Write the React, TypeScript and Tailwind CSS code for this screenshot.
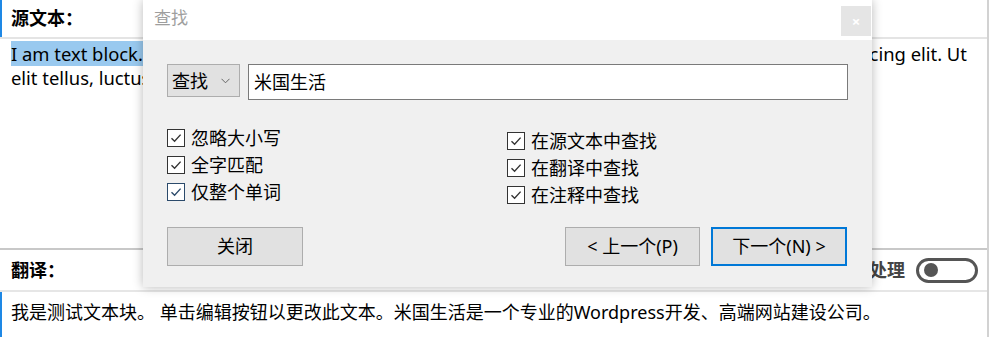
import React from "react";

const FONT = '"Noto Sans", "Noto Sans CJK SC", sans-serif';

function Check({ focus }: { focus?: boolean }) {
  return (
    <span
      className={`flex h-[18px] w-[18px] shrink-0 items-center justify-center border bg-white ${
        focus ? "border-[#2b4a6b]" : "border-[#333333]"
      }`}
    >
      <svg width="14" height="14" viewBox="0 0 14 14">
        <polyline
          points="2.5,7.2 5.6,10.2 11.6,3.6"
          fill="none"
          stroke={focus ? "#2b4a6b" : "#333333"}
          strokeWidth="1.4"
        />
      </svg>
    </span>
  );
}

function CheckRow({ label, focus }: { label: string; focus?: boolean }) {
  return (
    <div className="flex h-[27px] items-center gap-[6px]">
      <Check focus={focus} />
      <span className="text-[18px] leading-none text-[#000]">{label}</span>
    </div>
  );
}

export default function App() {
  return (
    <div
      className="relative h-[337px] w-[991px] overflow-hidden bg-white text-black"
      style={{ fontFamily: FONT }}
    >
      <div className="flex h-[337px] w-[989px] flex-col border-r-2 border-[#d2d2d2]">
        <div className="flex h-[37px] shrink-0 items-center border-l-2 border-[#1e88e5] pl-[9px] text-[18px] font-bold">
          源文本：
        </div>
        <div className="h-[2px] shrink-0 bg-[#e4e4e4]" />
        <div className="h-[209px] shrink-0 overflow-hidden pl-[11px] pt-[3px] text-[18.4px] leading-[24px]">
          <div className="whitespace-nowrap">
            <span className="bg-[#99c9ef]">I am text block.</span> Click edit button to change this
            text. Lorem ipsum dolor sit amet, consectetur adipiscing elit. Ut
          </div>
          <div className="whitespace-nowrap">
            elit tellus, luctus nec ullamcorper mattis, pulvinar dapibus leo.
          </div>
        </div>
        <div className="h-[2px] shrink-0 bg-[#c8c8c8]" />
        <div className="flex h-[40px] shrink-0 items-center justify-between pl-[11px] pr-[9px]">
          <span className="text-[18px] font-bold">翻译：</span>
          <div className="flex items-center gap-[11px]">
            <span className="text-[18px] font-bold text-[#444]">自动翻译处理</span>
            <span className="flex h-[25px] w-[62px] items-center rounded-full border-[3px] border-[#555] pl-[5px]">
              <span className="h-[14px] w-[14px] rounded-full bg-[#555]" />
            </span>
          </div>
        </div>
        <div className="h-[2px] shrink-0 bg-[#e6e6e6]" />
        <div className="flex-1 border-l-2 border-[#1e88e5] pl-[9px] pt-[8px] text-[18px] leading-[25px]">
          我是测试文本块。 单击编辑按钮以更改此文本。米国生活是一个专业的Wordpress开发、高端网站建设公司。
        </div>
      </div>

      {/* Find dialog */}
      <div className="absolute left-[143px] top-0 flex h-[287px] w-[729px] flex-col shadow-[0_0_10px_rgba(0,0,0,0.28)]">
        <div className="flex h-[40px] shrink-0 items-start justify-between bg-white pl-[11px] pr-[1px]">
          <span className="mt-[7px] text-[17px] leading-[22px] text-[#9e9e9e]">查找</span>
          <span className="mt-[6px] flex h-[30px] w-[30px] items-center justify-center bg-[#e5e5e5] text-[15px] font-bold leading-none text-white">
            ×
          </span>
        </div>
        <div className="flex flex-1 flex-col bg-[#f0f0f0] pl-[24px] pt-[24px]">
          <div className="flex items-start gap-[8px]">
            <div className="flex h-[33px] w-[73px] items-center justify-between border border-[#adadad] bg-[#e1e1e1] pl-[4px] pr-[9px]">
              <span className="text-[18px] leading-none">查找</span>
              <svg width="9" height="6" viewBox="0 0 9 6">
                <polyline points="0.5,0.8 4.5,4.8 8.5,0.8" fill="none" stroke="#666" strokeWidth="1" />
              </svg>
            </div>
            <div className="flex h-[36px] w-[600px] items-center border border-[#7a7a7a] bg-white pl-[5px]">
              <span className="text-[18px] leading-none">米国生活</span>
            </div>
          </div>
          <div className="mt-[24px] flex">
            <div className="flex w-[340px] flex-col">
              <CheckRow label="忽略大小写" />
              <CheckRow label="全字匹配" />
              <CheckRow label="仅整个单词" focus />
            </div>
            <div className="mt-[3px] flex flex-col">
              <CheckRow label="在源文本中查找" />
              <CheckRow label="在翻译中查找" />
              <CheckRow label="在注释中查找" />
            </div>
          </div>
          <div className="mt-[19px] flex items-center">
            <button className="flex h-[39px] w-[136px] items-center justify-center border border-[#adadad] bg-[#e1e1e1] text-[18px]">
              关闭
            </button>
            <button className="ml-[262px] flex h-[39px] w-[135px] items-center justify-center border border-[#adadad] bg-[#e1e1e1] text-[18px]">
              &lt; 上一个(P)
            </button>
            <button className="ml-[11px] flex h-[39px] w-[136px] items-center justify-center border-2 border-[#0078d7] bg-[#e1e1e1] text-[18px]">
              下一个(N) &gt;
            </button>
          </div>
        </div>
      </div>
    </div>
  );
}
